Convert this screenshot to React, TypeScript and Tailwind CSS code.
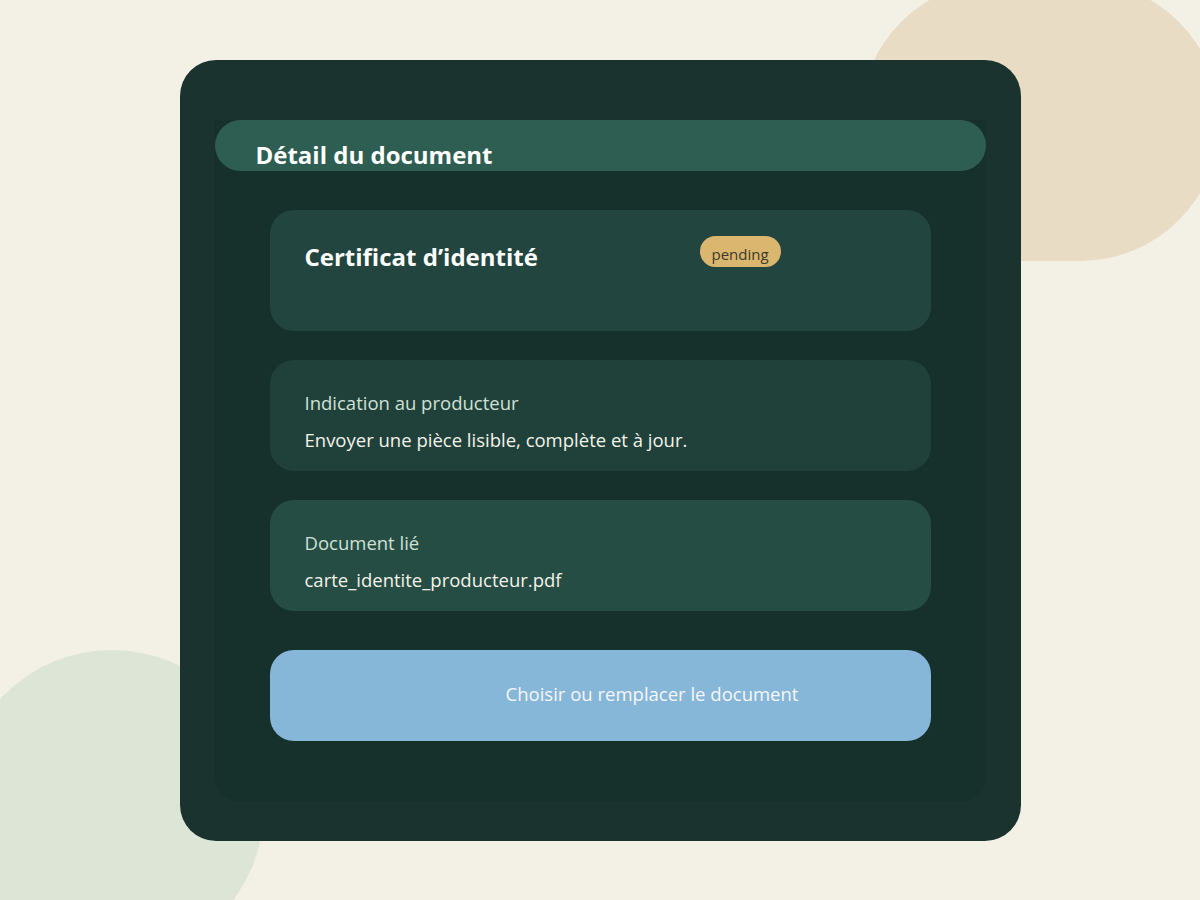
import React from 'react';

interface InfoCardProps {
  label: string;
  value: string;
  tone: string;
}

function InfoCard({ label, value, tone }: InfoCardProps) {
  return (
    <div className={`${tone} rounded-[24px] h-[111px] px-[35px] pt-[30px]`}>
      <div className="text-[18.5px] leading-[26px] text-[#cfe0d6]">{label}</div>
      <div className="mt-[11px] text-[18.5px] leading-[26px] text-[#f3f2ea]">{value}</div>
    </div>
  );
}

export default function App() {
  return (
    <div
      className="relative w-[1200px] h-[900px] overflow-hidden bg-[#f3f0e6]"
      style={{ fontFamily: '"Open Sans", "Noto Sans", sans-serif' }}
    >
      {/* decorative blobs */}
      <div className="absolute left-[860px] top-[-19px] w-[360px] h-[280px] rounded-full bg-[#e8dcc5]" />
      <div className="absolute left-[-40px] top-[650px] w-[304px] h-[310px] rounded-full bg-[#dde6d6]" />

      <div className="relative flex justify-center pt-[60px]">
        <div className="w-[841px] h-[781px] rounded-[36px] bg-[#1a332e] px-[35px] pt-[60px]">
          <div className="h-[681px] rounded-b-[24px] bg-[#16302b]">
            <div className="h-[51px] rounded-full bg-[#2e5e52] pl-[41px] pt-[19px]">
              <h2 className="text-[24px] leading-[32px] font-bold text-white">Détail du document</h2>
            </div>

            <div className="px-[55px] pt-[39px] flex flex-col">
              <div className="bg-[#224540] rounded-[24px] h-[121px] pl-[35px] pt-[31px] flex items-start">
                <h3 className="w-[395px] text-[24px] leading-[32px] font-bold text-white">Certificat d’identité</h3>
                <span className="mt-[-5px] h-[31px] px-[12px] rounded-full bg-[#dbb66e] text-[15px] leading-[31px] pt-[3px] text-[#3b3a2c]">
                  pending
                </span>
              </div>

              <div className="mt-[29px]">
                <InfoCard
                  tone="bg-[#20413a]"
                  label="Indication au producteur"
                  value="Envoyer une pièce lisible, complète et à jour."
                />
              </div>

              <div className="mt-[29px]">
                <InfoCard tone="bg-[#264d44]" label="Document lié" value="carte_identite_producteur.pdf" />
              </div>

              <button className="mt-[39px] h-[91px] rounded-[24px] bg-[#86b6d8] pl-[104px] pb-[4px] text-[18.5px] text-[#f5f7f8]">
                Choisir ou remplacer le document
              </button>
            </div>
          </div>
        </div>
      </div>
    </div>
  );
}
